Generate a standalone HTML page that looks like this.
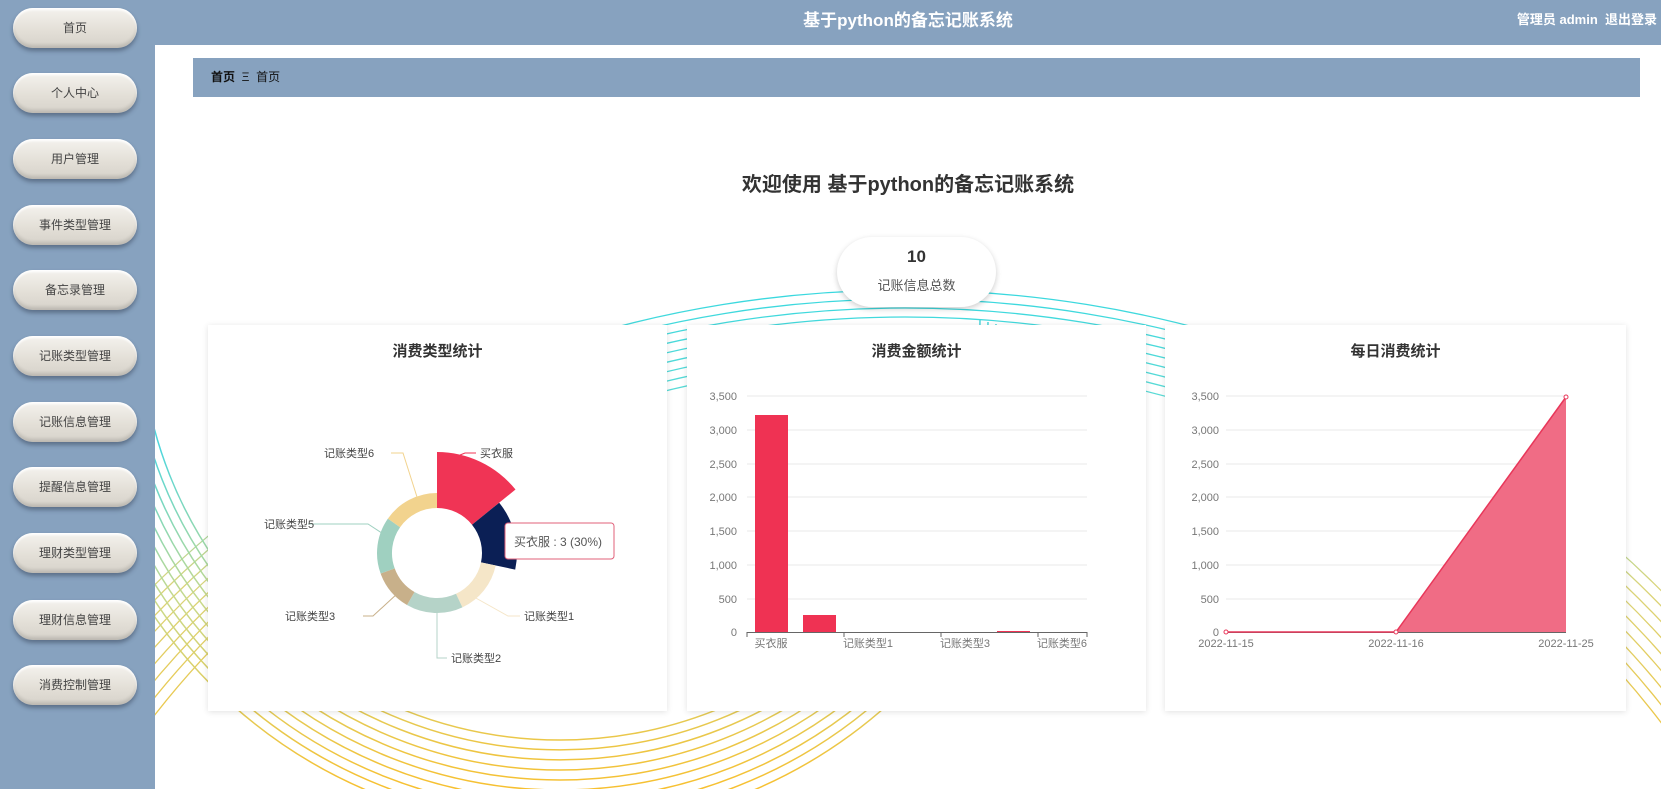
<!DOCTYPE html>
<html><head><meta charset="utf-8">
<style>
*{margin:0;padding:0;box-sizing:border-box}
body{width:1661px;height:789px;overflow:hidden;background:#fff;font-family:"Liberation Sans","Noto Sans CJK SC",sans-serif;position:relative}
.side{position:absolute;left:0;top:0;width:155px;height:789px;background:#87a2bf}
.btn{position:absolute;left:13px;width:124px;height:40px;border-radius:20px;background:linear-gradient(#f4f2ee,#e2ded6 60%,#d6d2ca);box-shadow:0 3px 4px rgba(40,50,70,.45),inset 0 2px 2px #fff,inset 0 -3px 3px rgba(0,0,0,.12);font-size:12px;color:#444;text-align:center;line-height:40px}
.head{position:absolute;left:155px;top:0;right:0;height:45px;background:#87a2bf}
.title{position:absolute;left:155px;right:0;top:0;text-align:center;line-height:42px;color:#fff;font-weight:bold;font-size:17px}
.user{position:absolute;right:4px;top:0;line-height:40px;color:#fff;font-weight:bold;font-size:13px}
.crumb{position:absolute;left:193px;top:58px;width:1447px;height:39px;background:#87a2bf;font-size:12px;line-height:39px;padding-left:18px;color:#111;font-weight:bold}
.welcome{position:absolute;left:155px;right:0;top:168px;text-align:center;font-size:20px;font-weight:bold;color:#333}
.pill{position:absolute;left:837px;top:237px;width:159px;height:70px;border-radius:35px;background:#fff;box-shadow:0 2px 6px rgba(0,0,0,.2);text-align:center}
.card{position:absolute;top:325px;height:386px;background:#fff;box-shadow:0 1px 6px rgba(0,0,0,.12)}
.ct{position:absolute;left:0;right:0;top:15px;text-align:center;font-size:15px;font-weight:bold;color:#333}
svg text{font-family:"Liberation Sans","Noto Sans CJK SC",sans-serif}
</style></head><body>
<svg style="position:absolute;left:0;top:0" width="1661" height="789">
<defs>
<linearGradient id="g1" gradientUnits="userSpaceOnUse" x1="0" y1="280" x2="0" y2="789"><stop offset="0" stop-color="#35d8e0"/><stop offset=".35" stop-color="#6fdcd0"/><stop offset=".6" stop-color="#d9d47a"/><stop offset="1" stop-color="#f5c030"/></linearGradient>
<linearGradient id="g2" gradientUnits="userSpaceOnUse" x1="0" y1="450" x2="0" y2="789"><stop offset="0" stop-color="#4fd6dc"/><stop offset=".45" stop-color="#c9d98a"/><stop offset="1" stop-color="#f7c030"/></linearGradient>
</defs>
<g fill="none" stroke="url(#g1)" stroke-width="1.3">
<ellipse cx="905" cy="1160" rx="1000" ry="870"/><ellipse cx="905" cy="1165" rx="990" ry="866"/><ellipse cx="905" cy="1170" rx="980" ry="862"/><ellipse cx="905" cy="1175" rx="970" ry="858"/><ellipse cx="905" cy="1180" rx="960" ry="854"/><ellipse cx="905" cy="1185" rx="950" ry="850"/><ellipse cx="905" cy="1190" rx="940" ry="846"/><ellipse cx="905" cy="1195" rx="930" ry="842"/><ellipse cx="905" cy="1200" rx="920" ry="838"/>
</g>
<g fill="none" stroke="url(#g2)" stroke-width="1.5">
<path d="M140,320 A420,420 0 0 0 980,320"/><path d="M132,322 A428,428 0 0 0 988,322"/><path d="M124,324 A436,436 0 0 0 996,324"/><path d="M116,326 A444,444 0 0 0 1004,326"/><path d="M108,328 A452,452 0 0 0 1012,328"/><path d="M100,330 A460,460 0 0 0 1020,330"/><path d="M92,332 A468,468 0 0 0 1028,332"/><path d="M84,334 A476,476 0 0 0 1036,334"/><path d="M76,336 A484,484 0 0 0 1044,336"/><path d="M68,338 A492,492 0 0 0 1052,338"/>
</g>
</svg>
<div class="side"></div>
<div class="btn" style="top:8px">首页</div>
<div class="btn" style="top:73px">个人中心</div>
<div class="btn" style="top:139px">用户管理</div>
<div class="btn" style="top:205px">事件类型管理</div>
<div class="btn" style="top:270px">备忘录管理</div>
<div class="btn" style="top:336px">记账类型管理</div>
<div class="btn" style="top:402px">记账信息管理</div>
<div class="btn" style="top:467px">提醒信息管理</div>
<div class="btn" style="top:533px">理财类型管理</div>
<div class="btn" style="top:600px">理财信息管理</div>
<div class="btn" style="top:665px">消费控制管理</div>
<div class="head"></div>
<div class="title">基于python的备忘记账系统</div>
<div class="user">管理员 admin &nbsp;退出登录</div>
<div class="crumb">首页 &nbsp;<span style="font-weight:normal">Ξ</span>&nbsp; <span style="font-weight:normal">首页</span></div>
<div class="welcome">欢迎使用 基于python的备忘记账系统</div>
<div class="pill"><div style="font-size:17px;font-weight:bold;color:#333;margin-top:10px">10</div><div style="font-size:13px;color:#555;margin-top:8px">记账信息总数</div></div>

<div class="card" style="left:208px;width:459px"><div class="ct">消费类型统计</div>
<svg width="459" height="386" style="position:absolute;left:0;top:0">
<g transform="translate(229,228)">
<path d="M0,-101 A101,101 0 0 1 78.5,-63.5 L35,-28.3 A45,45 0 0 0 0,-45Z" fill="#f03455"/>
<path d="M62.2,-50.3 A80,80 0 0 1 78.2,16.6 L44,9.4 A45,45 0 0 0 35,-28.3Z" fill="#0b1f55"/>
<path d="M58.7,12.5 A60,60 0 0 1 25.4,54.4 L19,40.8 A45,45 0 0 0 44,9.4Z" fill="#f5e6c8"/>
<path d="M25.4,54.4 A60,60 0 0 1 -30,52 L-22.5,39 A45,45 0 0 0 19,40.8Z" fill="#b5d3c8"/>
<path d="M-30,52 A60,60 0 0 1 -56.4,20.5 L-42.3,15.4 A45,45 0 0 0 -22.5,39Z" fill="#c8b08a"/>
<path d="M-56.4,20.5 A60,60 0 0 1 -49.1,-34.4 L-36.9,-25.8 A45,45 0 0 0 -42.3,15.4Z" fill="#9fd0c0"/>
<path d="M-49.1,-34.4 A60,60 0 0 1 0,-60 L0,-45 A45,45 0 0 0 -36.9,-25.8Z" fill="#f2d38e"/>
</g>
<g fill="none" stroke-width="1">
<polyline points="252,130 257,128 268,128" stroke="#f03455"/>
<polyline points="209,172 195,128 183,128" stroke="#f2d38e"/>
<polyline points="180,212 160,199 100,199" stroke="#9fd0c0"/>
<polyline points="190,268 165,291 155,291" stroke="#c8b08a"/>
<polyline points="229,285 229,333 239,333" stroke="#b5d3c8"/>
<polyline points="266,272 300,291 312,291" stroke="#f5e6c8"/>
</g>
<g font-size="11" fill="#444">
<text x="272" y="132">买衣服</text>
<text x="116" y="132">记账类型6</text>
<text x="56" y="203">记账类型5</text>
<text x="77" y="295">记账类型3</text>
<text x="243" y="337">记账类型2</text>
<text x="316" y="295">记账类型1</text>
</g>
<rect x="297" y="198" width="109" height="36" rx="3" fill="#fff" stroke="#e0607a" stroke-width="1"/>
<text x="306" y="221" font-size="12" fill="#555">买衣服 : 3 (30%)</text>
</svg></div>

<div class="card" style="left:687px;width:459px"><div class="ct">消费金额统计</div>
<svg width="459" height="386" style="position:absolute;left:0;top:0">
<g stroke="#e8e8e8" stroke-width="1">
<line x1="60" y1="71" x2="400" y2="71"/><line x1="60" y1="105" x2="400" y2="105"/><line x1="60" y1="139" x2="400" y2="139"/><line x1="60" y1="172" x2="400" y2="172"/><line x1="60" y1="206" x2="400" y2="206"/><line x1="60" y1="240" x2="400" y2="240"/><line x1="60" y1="274" x2="400" y2="274"/>
</g>
<line x1="60" y1="307.5" x2="400" y2="307.5" stroke="#666"/>
<g stroke="#666"><line x1="60" y1="307" x2="60" y2="312"/><line x1="157" y1="307" x2="157" y2="312"/><line x1="254" y1="307" x2="254" y2="312"/><line x1="351" y1="307" x2="351" y2="312"/><line x1="400" y1="307" x2="400" y2="312"/></g>
<rect x="68" y="90" width="33" height="217" fill="#ef3253"/>
<rect x="116" y="290" width="33" height="17" fill="#ef3253"/>
<rect x="310" y="306" width="33" height="1" fill="#ef3253"/>
<g font-size="11" fill="#777" text-anchor="end">
<text x="50" y="75">3,500</text><text x="50" y="109">3,000</text><text x="50" y="143">2,500</text><text x="50" y="176">2,000</text><text x="50" y="210">1,500</text><text x="50" y="244">1,000</text><text x="50" y="278">500</text><text x="50" y="311">0</text>
</g>
<g font-size="11" fill="#777" text-anchor="middle">
<text x="84" y="322">买衣服</text><text x="181" y="322">记账类型1</text><text x="278" y="322">记账类型3</text><text x="375" y="322">记账类型6</text>
</g>
</svg></div>

<div class="card" style="left:1165px;width:461px"><div class="ct">每日消费统计</div>
<svg width="461" height="386" style="position:absolute;left:0;top:0">
<g stroke="#e8e8e8" stroke-width="1">
<line x1="61" y1="71" x2="401" y2="71"/><line x1="61" y1="105" x2="401" y2="105"/><line x1="61" y1="139" x2="401" y2="139"/><line x1="61" y1="172" x2="401" y2="172"/><line x1="61" y1="206" x2="401" y2="206"/><line x1="61" y1="240" x2="401" y2="240"/><line x1="61" y1="274" x2="401" y2="274"/>
</g>
<line x1="61" y1="307.5" x2="401" y2="307.5" stroke="#666"/>
<polygon points="231,307 401,72 401,307" fill="#f06c85"/>
<polyline points="61,307 231,307 401,72" fill="none" stroke="#e8375a" stroke-width="1.5"/>
<g fill="#fff" stroke="#e8375a"><circle cx="61" cy="307" r="2"/><circle cx="231" cy="307" r="2"/><circle cx="401" cy="72" r="2"/></g>
<g font-size="11" fill="#777" text-anchor="end">
<text x="54" y="75">3,500</text><text x="54" y="109">3,000</text><text x="54" y="143">2,500</text><text x="54" y="176">2,000</text><text x="54" y="210">1,500</text><text x="54" y="244">1,000</text><text x="54" y="278">500</text><text x="54" y="311">0</text>
</g>
<g font-size="11" fill="#777" text-anchor="middle">
<text x="61" y="322">2022-11-15</text><text x="231" y="322">2022-11-16</text><text x="401" y="322">2022-11-25</text>
</g>
</svg></div>
</body></html>
